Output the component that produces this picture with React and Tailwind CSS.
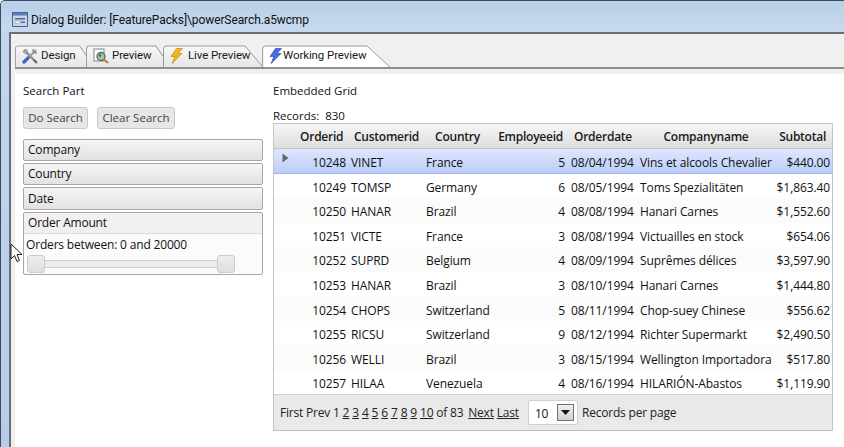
const rows = [
  ["10248","VINET","France","5","08/04/1994","Vins et alcools Chevalier","$440.00"],
  ["10249","TOMSP","Germany","6","08/05/1994","Toms Spezialitäten","$1,863.40"],
  ["10250","HANAR","Brazil","4","08/08/1994","Hanari Carnes","$1,552.60"],
  ["10251","VICTE","France","3","08/08/1994","Victuailles en stock","$654.06"],
  ["10252","SUPRD","Belgium","4","08/09/1994","Suprêmes délices","$3,597.90"],
  ["10253","HANAR","Brazil","3","08/10/1994","Hanari Carnes","$1,444.80"],
  ["10254","CHOPS","Switzerland","5","08/11/1994","Chop-suey Chinese","$556.62"],
  ["10255","RICSU","Switzerland","9","08/12/1994","Richter Supermarkt","$2,490.50"],
  ["10256","WELLI","Brazil","3","08/15/1994","Wellington Importadora","$517.80"],
  ["10257","HILAA","Venezuela","4","08/16/1994","HILARIÓN-Abastos","$1,119.90"],
];

const cols = "grid grid-cols-[26px_48px_75px_67px_78px_69px_136px_59px]";

function TabShape({ active }) {
  return (
    <svg className="absolute inset-0 w-full h-full" preserveAspectRatio="none" viewBox="0 0 100 22">
      <defs>
        <linearGradient id="tabgrad" x1="0" y1="0" x2="0" y2="1">
          <stop offset="0" stopColor="#f7f7f7" />
          <stop offset="1" stopColor="#e6e6e6" />
        </linearGradient>
      </defs>
      <path
        d="M0.5 22 V4 Q0.5 1 3 1 H82 L100 22"
        fill={active ? "#ffffff" : "url(#tabgrad)"}
        stroke="#9a9a9a"
        strokeWidth="1"
        vectorEffect="non-scaling-stroke"
      />
    </svg>
  );
}

function Bolt({ color, edge }) {
  return (
    <svg width="13" height="16" viewBox="0 0 12 16" preserveAspectRatio="none" className="shrink-0">
      <path d="M6 0.5 H11.5 L7.5 5.5 H11 L2 15.5 L4.5 8.5 H1 Z" fill={color} stroke={edge} strokeWidth="0.7" />
    </svg>
  );
}

function ToolsIcon() {
  return (
    <svg width="16" height="16" viewBox="0 0 16 16" className="shrink-0">
      <path d="M2 2 L14 14" stroke="#8d8d8d" strokeWidth="2.4" />
      <path d="M1 4 L4 1 L6 4 L4 6 Z" fill="#a8a8a8" stroke="#6d6d6d" strokeWidth="0.5" />
      <path d="M14 2 L4 12" stroke="#9a9a9a" strokeWidth="2.2" />
      <path d="M6 10 L2 14" stroke="#3f66c9" strokeWidth="3.4" strokeLinecap="round" />
      <path d="M11 1 A3 3 0 0 0 15 5 L13 4 L12 3 Z" fill="#a0a0a0" stroke="#6d6d6d" strokeWidth="0.5" />
      <path d="M12 12 L15 15" stroke="#6a6a6a" strokeWidth="2" />
    </svg>
  );
}

function PreviewIcon() {
  return (
    <svg width="16" height="16" viewBox="0 0 16 16" className="shrink-0">
      <rect x="1" y="1" width="10" height="12" fill="#ffffff" stroke="#7d8794" strokeWidth="1" />
      <circle cx="8" cy="8.5" r="4" fill="#a9c5a0" stroke="#5b6671" strokeWidth="1.3" />
      <circle cx="7" cy="7.5" r="1.4" fill="#3e7d5a" />
      <path d="M11 11.5 L15 15" stroke="#c87a34" strokeWidth="2.2" />
    </svg>
  );
}

function WindowIcon() {
  return (
    <svg width="16" height="15" viewBox="0 0 16 15">
      <rect x="0.5" y="0.5" width="15" height="14" fill="#c9d6ea" stroke="#4a6496" />
      <rect x="1" y="1" width="14" height="2.5" fill="#5b7fb8" />
      <rect x="3" y="6" width="10" height="1.5" fill="#56698c" />
      <rect x="3" y="9" width="5" height="2.5" fill="#f4f7fb" stroke="#7d8fae" strokeWidth="0.5" />
      <rect x="9" y="9.5" width="4" height="1.5" fill="#56698c" />
    </svg>
  );
}

function Tab({ w, active, icon, label, gap, className = "" }) {
  return (
    <div className={`relative h-[22px] ${w} ${className}`}>
      <TabShape active={active} />
      <div className={`relative flex items-center ${gap} h-full pl-[7px] text-[11.5px] tracking-[-0.1px] text-[#1a1a1a]`} style={{ fontFamily: 'Roboto, sans-serif' }}>
        {icon}
        <span>{label}</span>
      </div>
    </div>
  );
}

function AccordionHead({ children, h = "h-[22px]" }) {
  return (
    <div className={`${h} border border-[#a6a6a6] rounded-[2px] bg-gradient-to-b from-[#f5f5f5] to-[#e2e2e2] pl-[4px] flex items-center text-[12px] tracking-[-0.2px] text-[#111]`}>
      {children}
    </div>
  );
}

export default function App() {
  return (
    <div
      className="relative w-[844px] h-[447px] overflow-hidden flex flex-col bg-gradient-to-b from-[#c3d6ec] to-[#b5cdea] border-l border-t border-[#3d4a5c] rounded-tl-[5px]"
      style={{ fontFamily: '"Open Sans", "Noto Sans", sans-serif' }}
    >
      <div className="h-[31px] shrink-0 flex items-center pl-[11px] pt-[6px] gap-[3px] text-[12px] tracking-[-0.1px] text-[#111] bg-gradient-to-b from-[#b9cfe8] to-[#c7d9ee]">
        <WindowIcon />
        <span style={{ fontFamily: 'Roboto, sans-serif' }}>Dialog Builder: [FeaturePacks]\powerSearch.a5wcmp</span>
      </div>

      <div className="flex-1 ml-[8px] border-l-2 border-t-2 border-[#6a6f76] bg-[#f0f0f0] pt-[11px] pl-[4px] flex flex-col min-h-0">
        <div className="flex items-end h-[22px] shrink-0">
          <Tab w="w-[79px]" gap="gap-[3px]" icon={<ToolsIcon />} label="Design" />
          <Tab w="w-[85px]" gap="gap-[3px]" className="-ml-[8px]" icon={<PreviewIcon />} label="Preview" />
          <Tab w="w-[100px]" gap="gap-[5px]" className="-ml-[8px]" icon={<Bolt color="#f2b71f" edge="#c98a12" />} label="Live Preview" />
          <Tab w="w-[128px]" gap="gap-[1px]" className="-ml-[1px]" active icon={<Bolt color="#4a6fe0" edge="#2f4bb0" />} label="Working Preview" />
        </div>
        <div className="h-[2px] bg-[#8f8f8f] shrink-0" />
        <div className="h-[5px] bg-[#f0f0f0] shrink-0" />

        <div className="flex-1 bg-white flex text-[12px] text-[#111] pl-[8px] pt-[9px] min-h-0">
          <div className="w-[240px] shrink-0 flex flex-col">
            <div className="h-[16px] leading-[16px] text-[11.5px]">Search Part</div>
            <div className="flex gap-[9px] mt-[8px]">
              <div className="w-[65px] h-[22px] border border-[#c8c8c8] rounded-[3px] bg-[#e6e6e6] flex items-center justify-center text-[#444] text-[11.5px]">Do Search</div>
              <div className="w-[78px] h-[22px] border border-[#c8c8c8] rounded-[3px] bg-[#e6e6e6] flex items-center justify-center text-[#444] text-[11.5px]">Clear Search</div>
            </div>
            <div className="mt-[10px] flex flex-col gap-[2px]">
              <AccordionHead>Company</AccordionHead>
              <AccordionHead>Country</AccordionHead>
              <AccordionHead h="h-[23px]">Date</AccordionHead>
            </div>
            <div className="mt-[2px] h-[63px] border border-[#a6a6a6] rounded-[2px] bg-[#fbfbfb] flex flex-col">
              <div className="h-[21px] shrink-0 bg-[#f1efef] border-b border-[#dddddd] pl-[4px] flex items-center tracking-[-0.2px]">Order Amount</div>
              <div className="pl-[2px] mt-[3px] h-[16px] leading-[16px] tracking-[-0.17px]">Orders between: 0 and 20000</div>
              <div className="relative ml-[3px] mt-[2px] w-[208px] h-[18px] flex items-center">
                <div className="w-full h-[8px] border border-[#cfcfcf] bg-[#ececec]" />
                <div className="absolute left-0 top-0 w-[18px] h-[18px] rounded-[3px] border border-[#cccccc] bg-gradient-to-b from-[#eeeeee] to-[#dedede]" />
                <div className="absolute right-0 top-0 w-[18px] h-[18px] rounded-[3px] border border-[#cccccc] bg-gradient-to-b from-[#eeeeee] to-[#dedede]" />
              </div>
            </div>
          </div>

          <div className="ml-[10px] w-[560px] shrink-0 flex flex-col">
            <div className="h-[16px] leading-[16px] text-[11.5px]">Embedded Grid</div>
            <div className="mt-[10px] h-[14px] leading-[14px] text-[11.5px]">Records:&nbsp; 830</div>
            <div className="h-[308px] border border-[#c4c4c4] border-b-[#bdbdbd] flex flex-col">
              <div className={`${cols} h-[25px] shrink-0 items-center pt-[2px] font-semibold text-[#1a1a1a] text-[12px] tracking-[-0.25px] bg-gradient-to-b from-[#f6f6f6] to-[#dedede] border-b border-[#c4c4c4]`}>
                <div />
                <div className="text-left">Orderid</div>
                <div className="text-center pl-[2px]">Customerid</div>
                <div className="text-center ml-[1px] -mr-[1px]">Country</div>
                <div className="text-right pr-[5px]">Employeeid</div>
                <div className="text-center pl-[1px]">Orderdate</div>
                <div className="text-center pl-[2px]">Companyname</div>
                <div className="text-right pr-[6px]">Subtotal</div>
              </div>
              {rows.map((r, i) => (
                <div
                  key={r[0]}
                  className={`${cols} h-[24.55px] shrink-0 items-center pt-[4px] text-[12px] tracking-[-0.1px] text-[#111] ${
                    i === 0
                      ? "bg-gradient-to-b from-[#dfe7fd] to-[#bccdfa] border-b border-[#9db7f5]"
                      : i % 2 === 1
                      ? "bg-white"
                      : "bg-[#fbfbfb]"
                  }`}
                >
                  <div className="pl-[8px] h-full flex items-start">
                    {i === 0 && (
                      <svg width="7" height="10" viewBox="0 0 7 10"><path d="M0.5 0.5 L6.5 5 L0.5 9.5 Z" fill="#666666" /></svg>
                    )}
                  </div>
                  <div className="text-right pr-[2px]">{r[0]}</div>
                  <div className="pl-[3px]">{r[1]}</div>
                  <div className="pl-[3px]">{r[2]}</div>
                  <div className="text-right pr-[3px]">{r[3]}</div>
                  <div className="pl-[3px] whitespace-nowrap">{r[4]}</div>
                  <div className="pl-[3px] whitespace-nowrap">{r[5]}</div>
                  <div className="text-right pr-[2px]">{r[6]}</div>
                </div>
              ))}
              <div className="flex-1 bg-[#e9e9e9] border-t border-[#cfcfcf] flex items-center pl-[6px] text-[12px] tracking-[-0.2px] text-[#222]">
                <span>First Prev 1&nbsp;</span>
                <span className="flex gap-[3px] underline">
                  <span>2</span><span>3</span><span>4</span><span>5</span><span>6</span><span>7</span><span>8</span><span>9</span><span>10</span>
                </span>
                <span>&nbsp;of 83&nbsp;</span>
                <span className="underline ml-[2px]">Next</span>
                <span className="underline ml-[3px]">Last</span>
                <div className="ml-[9px] w-[50px] h-[25px] bg-white border border-[#d0d0d0] rounded-[2px] flex items-center pl-[6px] pr-[3px] justify-between text-[12px] text-[#111]">
                  <span className="mt-[2px]">10</span>
                  <div className="w-[17px] h-[17px] border border-[#707070] bg-gradient-to-b from-[#f0f0f0] to-[#cfcfcf] flex items-center justify-center">
                    <svg width="9" height="5" viewBox="0 0 9 5"><path d="M0 0 H9 L4.5 5 Z" fill="#111" /></svg>
                  </div>
                </div>
                <span className="ml-[4px]">Records per page</span>
              </div>
            </div>
          </div>
        </div>
      </div>

      <svg className="absolute left-[9px] top-[242px]" width="13" height="20" viewBox="0 0 13 20">
        <path d="M1 1 V16 L4.5 12.5 L7 18.5 L9.5 17.5 L7 11.5 L12 11.5 Z" fill="#ffffff" stroke="#222222" strokeWidth="1" />
      </svg>
    </div>
  );
}
